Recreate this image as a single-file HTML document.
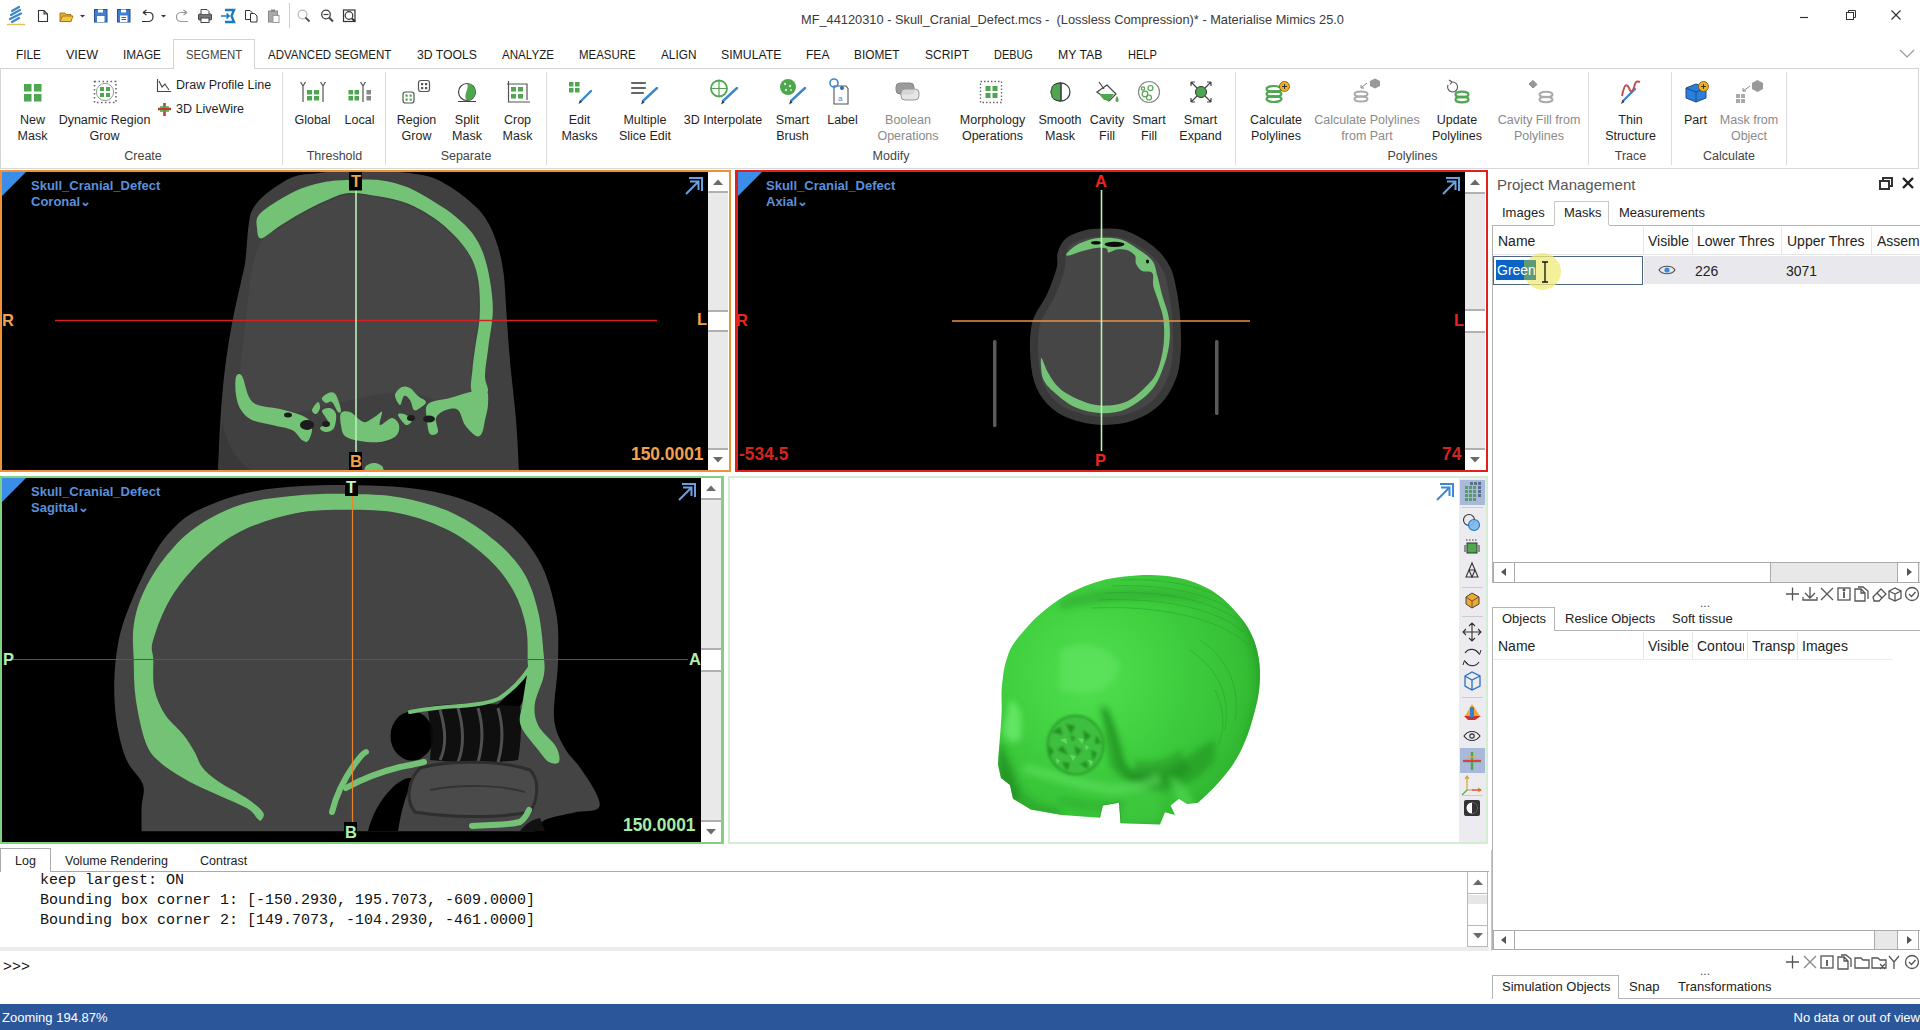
<!DOCTYPE html>
<html><head><meta charset="utf-8">
<style>
*{margin:0;padding:0;box-sizing:border-box}
html,body{width:1920px;height:1030px;overflow:hidden;background:#fff;font-family:"Liberation Sans",sans-serif;color:#222;position:relative}
.a{position:absolute}
.t{position:absolute;white-space:nowrap;line-height:1}
.menu{font-size:12.5px;color:#1a1a1a;top:49px}
.rl{position:absolute;font-size:12.5px;color:#1f1f1f;text-align:center;line-height:16px;white-space:nowrap;transform:translateX(-50%)}
.gl{color:#8a8a8a}
.grp{position:absolute;font-size:12.5px;color:#444;top:149.5px;transform:translateX(-50%);white-space:nowrap;line-height:1}
.sep{position:absolute;top:72px;width:1px;height:93px;background:#dcdcdc}
.vp{position:absolute;background:#000;overflow:hidden}
.vt{position:absolute;font-size:13px;font-weight:bold;color:#5a90dc;line-height:16px;white-space:nowrap}
.sb{position:absolute;width:20px;background:#e9e9e9}
.ol{position:absolute;font-weight:bold;font-size:15px;line-height:1}
</style></head><body>

<!-- TITLE BAR -->
<div class="t" style="left:801px;top:13px;font-size:13px;color:#3a3a3a;transform:scaleX(0.985);transform-origin:0 0">MF_44120310 - Skull_Cranial_Defect.mcs -&nbsp; (Lossless Compression)* - Materialise Mimics 25.0</div>

<!-- MENU -->
<div class="a" style="left:173px;top:39px;width:82px;height:30px;border:1px solid #d4d4d4;border-bottom:none;background:#fff"></div>
<div class="a" style="left:0;top:68px;width:1919px;height:101px;border:1px solid #d4d4d4;border-bottom-color:#d8d8d8"></div>
<div class="a" style="left:174px;top:67px;width:80px;height:3px;background:#fff"></div>
<div class="t menu" style="left:16px;transform:scaleX(0.944);transform-origin:0 0">FILE</div>
<div class="t menu" style="left:66px;transform:scaleX(1.0);transform-origin:0 0">VIEW</div>
<div class="t menu" style="left:123px;transform:scaleX(0.943);transform-origin:0 0">IMAGE</div>
<div class="t menu" style="left:186px;color:#444;transform:scaleX(0.907);transform-origin:0 0">SEGMENT</div>
<div class="t menu" style="left:268px;transform:scaleX(0.922);transform-origin:0 0">ADVANCED SEGMENT</div>
<div class="t menu" style="left:417px;transform:scaleX(0.978);transform-origin:0 0">3D TOOLS</div>
<div class="t menu" style="left:502px;transform:scaleX(0.927);transform-origin:0 0">ANALYZE</div>
<div class="t menu" style="left:579px;transform:scaleX(0.917);transform-origin:0 0">MEASURE</div>
<div class="t menu" style="left:661px;transform:scaleX(0.944);transform-origin:0 0">ALIGN</div>
<div class="t menu" style="left:721px;transform:scaleX(0.98);transform-origin:0 0">SIMULATE</div>
<div class="t menu" style="left:806px;transform:scaleX(0.965);transform-origin:0 0">FEA</div>
<div class="t menu" style="left:854px;transform:scaleX(0.948);transform-origin:0 0">BIOMET</div>
<div class="t menu" style="left:925px;transform:scaleX(0.96);transform-origin:0 0">SCRIPT</div>
<div class="t menu" style="left:994px;transform:scaleX(0.874);transform-origin:0 0">DEBUG</div>
<div class="t menu" style="left:1058px;transform:scaleX(0.984);transform-origin:0 0">MY TAB</div>
<div class="t menu" style="left:1128px;transform:scaleX(0.885);transform-origin:0 0">HELP</div>

<!-- RIBBON LABELS -->
<div class="rl" style="left:32.5px;top:112px">New<br>Mask</div>
<div class="rl" style="left:104.5px;top:112px">Dynamic Region<br>Grow</div>
<div class="t" style="left:176px;top:79px;font-size:12.5px;color:#1f1f1f">Draw Profile Line</div>
<div class="t" style="left:176px;top:103px;font-size:12.5px;color:#1f1f1f">3D LiveWire</div>
<div class="grp" style="left:143px">Create</div>
<div class="sep" style="left:282px"></div>
<div class="rl" style="left:312.5px;top:112px">Global</div>
<div class="rl" style="left:359.5px;top:112px">Local</div>
<div class="grp" style="left:334.5px">Threshold</div>
<div class="sep" style="left:385px"></div>
<div class="rl" style="left:416.5px;top:112px">Region<br>Grow</div>
<div class="rl" style="left:467px;top:112px">Split<br>Mask</div>
<div class="rl" style="left:517.5px;top:112px">Crop<br>Mask</div>
<div class="grp" style="left:466px">Separate</div>
<div class="sep" style="left:546px"></div>
<div class="rl" style="left:579.5px;top:112px">Edit<br>Masks</div>
<div class="rl" style="left:645px;top:112px">Multiple<br>Slice Edit</div>
<div class="rl" style="left:723px;top:112px">3D Interpolate</div>
<div class="rl" style="left:792.5px;top:112px">Smart<br>Brush</div>
<div class="rl" style="left:842.5px;top:112px">Label</div>
<div class="rl gl" style="left:908px;top:112px">Boolean<br>Operations</div>
<div class="rl" style="left:992.5px;top:112px">Morphology<br>Operations</div>
<div class="rl" style="left:1060px;top:112px">Smooth<br>Mask</div>
<div class="rl" style="left:1107px;top:112px">Cavity<br>Fill</div>
<div class="rl" style="left:1149px;top:112px">Smart<br>Fill</div>
<div class="rl" style="left:1200.5px;top:112px">Smart<br>Expand</div>
<div class="grp" style="left:891px">Modify</div>
<div class="sep" style="left:1235px"></div>
<div class="rl" style="left:1276px;top:112px">Calculate<br>Polylines</div>
<div class="rl gl" style="left:1367px;top:112px">Calculate Polylines<br>from Part</div>
<div class="rl" style="left:1457px;top:112px">Update<br>Polylines</div>
<div class="rl gl" style="left:1539px;top:112px">Cavity Fill from<br>Polylines</div>
<div class="grp" style="left:1412.5px">Polylines</div>
<div class="sep" style="left:1588px"></div>
<div class="rl" style="left:1630.5px;top:112px">Thin<br>Structure</div>
<div class="grp" style="left:1630.5px">Trace</div>
<div class="sep" style="left:1671px"></div>
<div class="rl" style="left:1695.5px;top:112px">Part</div>
<div class="rl gl" style="left:1749px;top:112px">Mask from<br>Object</div>
<div class="grp" style="left:1729px">Calculate</div>
<div class="sep" style="left:1786px"></div>


<svg class="a" style="left:0;top:0" width="1920" height="170" viewBox="0 0 1920 170">
<!-- quick access -->
<g>
<path d="M12,11 L19,7 M11,15 L20,10 M10,19 L21,13.5 M12,22 L19,18" stroke="#3c87c8" stroke-width="2.2" stroke-linecap="round"/>
<path d="M7,24.5 H25" stroke="#e0c060" stroke-width="1.5"/>
<path d="M38.5,10.5 H44 L47.5,14 V21.5 H38.5 Z M44,10.5 V14 H47.5" fill="#fff" stroke="#333" stroke-width="1.1"/>
<path d="M60,13 H65 L66,14.5 H71 V21.5 H60 Z" fill="#e8b030" stroke="#a07010" stroke-width="0.9"/>
<path d="M60,21.5 L62.5,16 H73 L71,21.5 Z" fill="#f5c542" stroke="#a07010" stroke-width="0.9"/>
<path d="M80,15 H85 L82.5,17.5 Z" fill="#333"/>
<rect x="94.5" y="9.5" width="12.5" height="12.5" fill="#3f7fd0" stroke="#23508a" stroke-width="1"/><rect x="98" y="9.5" width="5" height="3" fill="#fff"/><rect x="97" y="16" width="7.5" height="6" fill="#fff"/>
<rect x="117.5" y="9.5" width="12.5" height="12.5" fill="#3f7fd0" stroke="#23508a" stroke-width="1"/><rect x="121" y="9.5" width="5" height="3" fill="#fff"/><rect x="120" y="15.5" width="7.5" height="6.5" fill="#fff"/><path d="M121.5,17.5 H126 M121.5,19.5 H126" stroke="#333" stroke-width="0.8"/>
<path d="M143,12.5 L146.5,10 M143,12.5 L146.5,15 M143,12.5 H149 C152,12.5 153,15 153,17 C153,19.5 151,21.5 148,21.5 H142" fill="none" stroke="#333" stroke-width="1.2"/>
<path d="M161,15 H166 L163.5,17.5 Z" fill="#333"/>
<path d="M187,12.5 L183.5,10 M187,12.5 L183.5,15 M187,12.5 H181 C178,12.5 176.5,15 176.5,17 C176.5,19.5 178.5,21.5 181.5,21.5 H188" fill="none" stroke="#999" stroke-width="1.2"/>
<path d="M180,13.5 H187 M184.5,11 L187,13.5 L184.5,16 M180,21.5 H188" fill="none" stroke="#777" stroke-width="1" opacity="0"/>
<rect x="198.5" y="14" width="13" height="6" rx="1" fill="#777" stroke="#444" stroke-width="1"/><path d="M201,14 V9.5 H207 L209,11.5 V14" fill="#fff" stroke="#444" stroke-width="1"/><rect x="201" y="18" width="8" height="4.5" fill="#fff" stroke="#444" stroke-width="1"/>
<path d="M225,10 H234 L231.5,16 L234,22 H225" fill="none" stroke="#1a7ac0" stroke-width="2.4"/><path d="M221,16 H229 M226.5,13.5 L229,16 L226.5,18.5" stroke="#1a7ac0" stroke-width="1.6" fill="none"/>
<path d="M245.5,10.5 H250 L252,12.5 V19.5 H245.5 Z" fill="#fff" stroke="#333" stroke-width="1"/><path d="M250.5,13.5 H254.5 L257,16 V22 H250.5 Z" fill="#fff" stroke="#333" stroke-width="1"/>
<rect x="268.5" y="11" width="9" height="11" fill="#aaa" stroke="#888" stroke-width="1"/><rect x="271" y="9.5" width="4" height="2.5" fill="#888"/><rect x="273" y="15.5" width="6" height="7" fill="#fff" stroke="#999" stroke-width="1"/>
<path d="M289.5,3 V28" stroke="#d0d0d0"/>
<circle cx="302.5" cy="14.5" r="4.3" fill="none" stroke="#bbb" stroke-width="1.3"/><path d="M305.5,17.5 L309.5,21.5" stroke="#555" stroke-width="2"/>
<circle cx="326" cy="14.5" r="4.3" fill="none" stroke="#444" stroke-width="1.3"/><path d="M323.5,14.5 H328.5" stroke="#444" stroke-width="1.2"/><path d="M329,17.5 L333,21.5" stroke="#444" stroke-width="2"/>
<rect x="343.5" y="10" width="11.5" height="11.5" fill="none" stroke="#333" stroke-width="1.2"/><circle cx="349" cy="15.5" r="3.8" fill="none" stroke="#333" stroke-width="1.2"/><path d="M352,18.5 L355,21.5" stroke="#333" stroke-width="2"/>
</g>
<!-- window controls -->
<path d="M1800,17.5 H1808" stroke="#333" stroke-width="1.2"/>
<rect x="1846.5" y="12.5" width="7" height="7" fill="none" stroke="#333" stroke-width="1"/><path d="M1848.5,12.5 V10.5 H1855.5 V17.5 H1853.5" fill="none" stroke="#333" stroke-width="1"/>
<path d="M1891.5,10.5 L1900.5,19.5 M1900.5,10.5 L1891.5,19.5" stroke="#333" stroke-width="1.2"/>
<path d="M1900,50 L1907,57 L1914,50" fill="none" stroke="#999" stroke-width="1.2"/>
<!-- ribbon icons -->
<g fill="#4ea64e">
<rect x="24" y="84" width="7.5" height="7.5"/><rect x="34" y="84" width="7.5" height="7.5"/><rect x="24" y="94" width="7.5" height="7.5"/><rect x="34" y="94" width="7.5" height="7.5"/>
</g>
<rect x="94.5" y="81.5" width="21.5" height="21" fill="none" stroke="#666" stroke-width="1.6" stroke-dasharray="1.6,2.4"/>
<circle cx="105" cy="92" r="8.6" fill="#fff" stroke="#999" stroke-width="1"/>
<g fill="#4ea64e"><rect x="100" y="87" width="4" height="4"/><rect x="106" y="87" width="4" height="4"/><rect x="100" y="93" width="4" height="4"/><rect x="106" y="93" width="4" height="4"/></g>
<path d="M157.5,79 V91.5 H171 M159,81 L162,87 L165,84 L169,90" fill="none" stroke="#444" stroke-width="1.1"/>
<path d="M158,109 H171 M164.5,103 V116" stroke="#c0392b" stroke-width="2.5"/><rect x="160" y="106" width="9" height="6" fill="#4ea64e" opacity="0.8"/><path d="M158,109 H171" stroke="#c0392b" stroke-width="2"/>
<g fill="none" stroke="#555" stroke-width="1.2"><path d="M300.5,82 L303,86 V102 M305.5,82 L303,86 M320.5,82 L323,86 V102 M325.5,82 L323,86"/></g>
<g fill="#4ea64e"><rect x="307" y="90" width="5" height="4.5"/><rect x="314" y="90" width="5" height="4.5"/><rect x="307" y="96" width="5" height="4.5"/><rect x="314" y="96" width="5" height="4.5"/></g>
<g fill="#4ea64e"><rect x="348.5" y="90" width="4.5" height="4.5"/><rect x="354.5" y="90" width="4.5" height="4.5"/><rect x="348.5" y="96" width="4.5" height="4.5"/><rect x="354.5" y="96" width="4.5" height="4.5"/></g>
<path d="M360.5,82 L363,86 V102 M365.5,82 L363,86" fill="none" stroke="#555" stroke-width="1.2"/><g fill="#888"><rect x="366.5" y="90" width="4.5" height="4.5"/><rect x="366.5" y="96" width="4.5" height="4.5"/></g>
<rect x="403" y="92" width="11" height="11" rx="2.5" fill="#fff" stroke="#555" stroke-width="1.2"/><rect x="418.5" y="80.5" width="11" height="11" rx="2.5" fill="#fff" stroke="#555" stroke-width="1.2"/>
<g fill="#4ea64e"><rect x="405.5" y="94.5" width="2.2" height="2.2"/><rect x="409.5" y="94.5" width="2.2" height="2.2"/><rect x="405.5" y="98.5" width="2.2" height="2.2"/><rect x="409.5" y="98.5" width="2.2" height="2.2"/></g>
<g fill="#555"><rect x="421" y="83" width="2.2" height="2.2"/><rect x="425" y="83" width="2.2" height="2.2"/><rect x="421" y="87" width="2.2" height="2.2"/><rect x="425" y="87" width="2.2" height="2.2"/></g>
<circle cx="467" cy="92" r="8.5" fill="#fff" stroke="#444" stroke-width="1.2"/><path d="M467,83.5 A8.5,8.5 0 0 1 467,100.5 C462,96 470,88 467,83.5 Z" fill="#4ea64e"/><path d="M458,101.5 H476" stroke="#444" stroke-width="1"/>
<path d="M507,84 H527 V100 M508.5,81 V102 H530" fill="none" stroke="#555" stroke-width="1.2"/><g fill="#4ea64e"><rect x="511" y="87" width="5" height="4.5"/><rect x="518" y="87" width="5" height="4.5"/><rect x="511" y="94" width="5" height="4.5"/><rect x="518" y="94" width="5" height="4.5"/></g>
<g fill="#4ea64e"><rect x="569" y="82" width="4.5" height="4.5"/><rect x="575" y="82" width="4.5" height="4.5"/><rect x="569" y="88" width="4.5" height="4.5"/><rect x="575" y="88" width="4.5" height="4.5"/></g>
<g stroke="#3c87d0" stroke-width="2.4" stroke-linecap="round"><path d="M581,101 L591,91"/><path d="M643,101 L657,88"/><path d="M723,101 L737,88"/><path d="M791,101 L805,88"/><path d="M1623,101 L1635,89"/></g>
<g fill="#333"><path d="M578.5,104 L580,100 L582,102 Z"/><path d="M641,104.5 L642.5,100.5 L644.5,102.5 Z"/><path d="M721,104.5 L722.5,100.5 L724.5,102.5 Z"/><path d="M789,104.5 L790.5,100.5 L792.5,102.5 Z"/><path d="M1621,104 L1622.5,100 L1624.5,102 Z"/></g>
<g stroke="#666" stroke-width="2.2" stroke-linecap="round"><path d="M632,83 H645"/><path d="M632,88 H645"/><path d="M632,93 H643"/></g>
<circle cx="719" cy="88.5" r="8" fill="none" stroke="#4ea64e" stroke-width="1.8"/><path d="M711,88.5 H727 M719,80.5 V96.5" stroke="#4ea64e" stroke-width="1.2"/><ellipse cx="719" cy="88.5" rx="3.5" ry="8" fill="none" stroke="#4ea64e" stroke-width="1" opacity="0"/>
<circle cx="788" cy="87" r="8" fill="#4ea64e"/><g fill="#cfe8cf"><circle cx="785" cy="84" r="1.2"/><circle cx="790" cy="86" r="1.2"/><circle cx="786" cy="90" r="1.2"/><circle cx="791" cy="90" r="1"/></g>
<path d="M834,86 H846 L848,88.5 V104 H834 Z" fill="#fff" stroke="#555" stroke-width="1.1"/><circle cx="834" cy="83" r="4" fill="none" stroke="#3c87d0" stroke-width="1.6"/><circle cx="842" cy="88" r="2" fill="#2a6ab0"/><text x="838" y="101" font-size="8" fill="#3c87d0" font-family="Liberation Sans">a</text>
<rect x="896" y="83" width="18" height="11" rx="4" fill="#9a9a9a" stroke="#888"/><rect x="901" y="89" width="18" height="11" rx="4" fill="#e0e0e0" stroke="#999" fill-opacity="0.85"/>
<rect x="980.5" y="81.5" width="21" height="21" fill="none" stroke="#666" stroke-width="1.3" stroke-dasharray="1.5,2"/><g fill="#4ea64e"><rect x="985.5" y="86" width="5" height="5"/><rect x="992.5" y="86" width="5" height="5"/><rect x="985.5" y="93" width="5" height="5"/><rect x="992.5" y="93" width="5" height="5"/></g>
<circle cx="1061" cy="92" r="9" fill="#fff" stroke="#444" stroke-width="1.3"/><path d="M1061,83 C1055,83 1051,86 1052,89 C1050,91 1051,94 1052,95 C1051,98 1055,101 1061,101 Z" fill="#4ea64e" stroke="#333" stroke-width="1"/><path d="M1061,83 V101" stroke="#444" stroke-width="1.3"/>
<path d="M1097,92 L1107,85 L1116,94 L1109,101 Z" fill="#fff" stroke="#444" stroke-width="1.2"/><path d="M1099,94 L1114,94 L1109,101 L1104,100 Z" fill="#4ea64e"/><path d="M1099,82 L1104,89" stroke="#444" stroke-width="1.2"/><path d="M1117,96 C1115,99 1115,102 1117,102 C1119,102 1119,99 1117,96 Z" fill="#4ea64e"/>
<circle cx="1149" cy="92" r="10.5" fill="#fff" stroke="#888" stroke-width="1.2"/><g fill="none" stroke="#4ea64e" stroke-width="1.2"><circle cx="1145" cy="94" r="2.8"/><circle cx="1150.5" cy="88" r="2.5"/><circle cx="1149" cy="97.5" r="2.5"/><circle cx="1143" cy="88.5" r="1.6"/></g>
<circle cx="1201" cy="92" r="5.5" fill="#4ea64e" stroke="#333" stroke-width="1"/><g fill="none" stroke="#444" stroke-width="1.2"><path d="M1191,82 L1197,88 M1191,82 V86 M1191,82 H1195 M1211,82 L1205,88 M1211,82 V86 M1211,82 H1207 M1191,102 L1197,96 M1191,102 V98 M1191,102 H1195 M1211,102 L1205,96 M1211,102 V98 M1211,102 H1207"/></g>
<g fill="none" stroke="#4ea64e" stroke-width="2.2"><ellipse cx="1274" cy="89" rx="7.5" ry="3"/><ellipse cx="1274" cy="94" rx="7.5" ry="3"/><ellipse cx="1274" cy="99" rx="7.5" ry="3"/></g><circle cx="1284.5" cy="86.5" r="5" fill="#f0b020" stroke="#6a5010" stroke-width="0.8"/><path d="M1282,86.5 H1287 M1284.5,84 V89" stroke="#333" stroke-width="1"/>
<g fill="none" stroke="#aaa" stroke-width="2"><ellipse cx="1361" cy="94" rx="6.5" ry="2.6"/><ellipse cx="1361" cy="99" rx="6.5" ry="2.6"/></g><path d="M1370,81 L1375,78.5 L1380,81 V86 L1375,88.5 L1370,86 Z" fill="#999"/><path d="M1367,83 L1361,88 M1361,85 V88 H1364" fill="none" stroke="#888" stroke-width="1"/>
<path d="M1448,85 A5,5 0 1 0 1452,82 M1452,82 L1449,80 M1452,82 L1450,84.5" fill="none" stroke="#555" stroke-width="1.1"/><g fill="none" stroke="#4ea64e" stroke-width="2.2"><ellipse cx="1462" cy="94.5" rx="6.5" ry="2.8"/><ellipse cx="1462" cy="99.5" rx="6.5" ry="2.8"/></g>
<path d="M1529,84 L1533,80.5 L1537,84.5 L1533,88 Z" fill="#999" stroke="#888"/><g fill="none" stroke="#aaa" stroke-width="2"><ellipse cx="1546" cy="94.5" rx="6.5" ry="2.8"/><ellipse cx="1546" cy="99.5" rx="6.5" ry="2.8"/></g>
<path d="M1622,96 C1624,86 1626,82 1629,88 C1631,94 1633,92 1635,84 C1636,81 1638,81 1640,82" fill="none" stroke="#c05050" stroke-width="2"/>
<path d="M1686,88 L1696,84 L1706,88 V98 L1696,102 L1686,98 Z" fill="#2a80d8" stroke="#1a4a90" stroke-width="1"/><path d="M1686,88 L1696,92 L1706,88 M1696,92 V102" fill="none" stroke="#1a4a90" stroke-width="1"/><circle cx="1703.5" cy="86.5" r="5" fill="#f0b020" stroke="#6a5010" stroke-width="0.8"/><path d="M1701,86.5 H1706 M1703.5,84 V89" stroke="#333" stroke-width="1"/>
<g fill="#aaa"><rect x="1736" y="94" width="4" height="4"/><rect x="1741" y="94" width="4" height="4"/><rect x="1736" y="99" width="4" height="4"/><rect x="1741" y="99" width="4" height="4"/></g><path d="M1752,83 L1757.5,80 L1763,83 V89 L1757.5,92 L1752,89 Z" fill="#999"/><path d="M1750,86 L1743,91 M1743,88 V91 H1746" fill="none" stroke="#888" stroke-width="1"/>
</svg>


<!-- VIEWPORTS -->
<div class="a" style="left:0;top:170px;width:731px;height:302px;border:2px solid #f0913a"></div>

<!-- CORONAL -->
<svg class="a" style="left:2px;top:172px" width="706" height="298" viewBox="2 172 706 298">
<rect x="2" y="172" width="706" height="298" fill="#000"/>
<path d="M218.0,472.0 C218.4,463.3 219.3,436.6 220.4,419.6 C221.5,402.6 222.9,386.0 224.8,370.0 C226.7,354.0 229.3,338.1 232.0,323.5 C234.7,308.9 238.6,292.9 240.8,282.7 C243.0,272.4 243.9,271.7 245.2,262.0 C246.5,252.3 247.4,233.3 248.7,224.4 C250.0,215.5 250.1,213.8 253.0,208.7 C255.9,203.6 259.6,199.1 266.2,193.8 C272.8,188.6 283.6,180.7 292.4,177.2 C301.1,173.7 307.4,174.1 318.7,172.9 C330.0,171.7 343.0,169.7 360.0,170.0 C377.0,170.3 406.1,172.1 420.8,174.7 C435.5,177.3 439.0,180.4 448.0,185.6 C457.0,190.8 468.2,199.7 475.0,206.0 C481.8,212.3 484.9,216.9 488.7,223.7 C492.5,230.5 495.5,238.4 498.0,246.8 C500.5,255.2 502.3,263.1 503.7,274.0 C505.1,284.9 505.3,297.5 506.4,312.0 C507.4,326.5 508.4,343.1 510.0,361.0 C511.6,378.9 514.5,401.1 516.0,419.6 C517.5,438.1 518.5,463.3 519.0,472.0 L519,475 L218,475 Z" fill="#404040"/>
<path d="M262.0,240.0 C266.7,233.0 273.5,232.2 280.0,228.0 C286.5,223.8 293.2,219.3 301.0,215.0 C308.8,210.7 319.0,205.3 327.0,202.0 C335.0,198.7 340.2,195.7 349.0,195.0 C357.8,194.3 370.3,196.3 380.0,198.0 C389.7,199.7 398.0,201.3 407.0,205.0 C416.0,208.7 426.3,214.8 434.0,220.0 C441.7,225.2 447.5,230.7 453.0,236.0 C458.5,241.3 463.3,246.7 467.0,252.0 C470.7,257.3 473.2,262.0 475.0,268.0 C476.8,274.0 477.5,279.7 478.0,288.0 C478.5,296.3 478.7,308.2 478.0,318.0 C477.3,327.8 475.2,338.3 474.0,347.0 C472.8,355.7 471.7,362.0 471.0,370.0 C470.3,378.0 475.2,390.0 470.0,395.0 C464.8,400.0 451.7,400.5 440.0,400.0 C428.3,399.5 415.0,392.0 400.0,392.0 C385.0,392.0 366.7,396.7 350.0,400.0 C333.3,403.3 316.7,410.3 300.0,412.0 C283.3,413.7 260.0,415.3 250.0,410.0 C240.0,404.7 240.7,395.0 240.0,380.0 C239.3,365.0 244.0,338.3 246.0,320.0 C248.0,301.7 249.3,283.3 252.0,270.0 C254.7,256.7 257.3,247.0 262.0,240.0 Z" fill="#464646"/>
<path d="M222,420 C228,450 240,465 255,472 L218,472 Z" fill="#393939"/>
<g fill="#74c276">
<path d="M258.4,215.7 C261.4,211.5 267.9,207.1 275.0,202.6 C282.1,198.1 292.5,192.1 301.2,188.6 C309.9,185.1 319.4,183.0 327.4,181.6 C335.4,180.2 340.4,180.1 349.2,179.9 C358.0,179.7 370.4,179.0 380.0,180.2 C389.6,181.4 397.9,183.4 407.0,187.0 C416.1,190.6 426.2,197.0 434.4,202.0 C442.6,207.0 449.7,211.7 456.0,216.9 C462.3,222.1 467.8,227.1 472.4,233.2 C476.9,239.3 480.4,245.7 483.3,253.6 C486.2,261.5 488.4,271.0 490.0,280.7 C491.6,290.4 493.1,301.0 492.8,312.0 C492.5,323.0 489.7,336.1 488.4,346.8 C487.1,357.5 485.1,368.5 485.0,376.0 C484.9,383.5 489.7,389.3 487.5,392.0 C485.3,394.7 474.5,395.7 472.0,392.0 C469.5,388.3 471.8,377.5 472.4,370.0 C472.9,362.5 474.1,355.5 475.3,346.8 C476.5,338.1 479.0,327.5 479.6,317.6 C480.2,307.7 479.9,295.9 479.2,287.5 C478.4,279.1 477.1,273.1 475.1,267.0 C473.1,260.9 470.6,256.2 467.0,250.8 C463.4,245.4 458.8,239.9 453.4,234.5 C448.0,229.1 442.1,223.4 434.4,218.2 C426.7,213.0 416.1,206.9 407.0,203.3 C397.9,199.7 389.6,198.2 380.0,196.5 C370.4,194.8 358.0,192.4 349.2,193.0 C340.4,193.6 335.4,196.7 327.4,200.0 C319.4,203.3 309.2,208.6 301.2,213.0 C293.2,217.4 286.0,222.0 279.3,226.2 C272.6,230.4 264.7,238.1 261.0,238.4 C257.3,238.7 257.4,231.8 257.0,228.0 C256.6,224.2 255.4,219.9 258.4,215.7 Z"/>
<path d="M236.0,377.0 C237.0,373.8 239.8,372.7 242.0,376.0 C244.2,379.3 246.3,392.2 249.0,397.0 C251.7,401.8 252.8,403.0 258.0,405.0 C263.2,407.0 273.3,407.5 280.0,409.0 C286.7,410.5 293.2,412.2 298.0,414.0 C302.8,415.8 306.7,417.3 309.0,420.0 C311.3,422.7 312.2,426.5 312.0,430.0 C311.8,433.5 309.7,439.3 308.0,441.0 C306.3,442.7 304.7,441.8 302.0,440.0 C299.3,438.2 297.0,432.5 292.0,430.0 C287.0,427.5 278.7,426.7 272.0,425.0 C265.3,423.3 257.2,422.5 252.0,420.0 C246.8,417.5 243.7,414.2 241.0,410.0 C238.3,405.8 236.8,400.5 236.0,395.0 C235.2,389.5 235.0,380.2 236.0,377.0 Z"/><path d="M322.0,398.0 C322.7,396.2 327.7,393.0 330.0,392.5 C332.3,392.0 334.2,392.1 336.0,395.0 C337.8,397.9 340.7,407.2 341.0,410.0 C341.3,412.8 339.5,413.3 338.0,412.0 C336.5,410.7 334.0,403.5 332.0,402.0 C330.0,400.5 327.7,403.7 326.0,403.0 C324.3,402.3 321.3,399.8 322.0,398.0 Z"/><path d="M312.0,410.0 C312.3,408.0 316.7,402.3 318.0,402.0 C319.3,401.7 320.3,406.0 320.0,408.0 C319.7,410.0 317.3,413.7 316.0,414.0 C314.7,414.3 311.7,412.0 312.0,410.0 Z"/><path d="M322.0,411.0 C322.3,408.7 327.7,407.5 330.0,408.0 C332.3,408.5 335.3,410.7 336.0,414.0 C336.7,417.3 335.7,425.0 334.0,428.0 C332.3,431.0 328.3,432.0 326.0,432.0 C323.7,432.0 319.7,429.7 320.0,428.0 C320.3,426.3 327.7,424.8 328.0,422.0 C328.3,419.2 321.7,413.3 322.0,411.0 Z"/><path d="M341.0,413.0 C342.5,410.8 346.8,410.8 350.0,412.0 C353.2,413.2 357.3,418.3 360.0,420.0 C362.7,421.7 363.3,422.7 366.0,422.0 C368.7,421.3 373.3,417.7 376.0,416.0 C378.7,414.3 381.3,410.5 382.0,412.0 C382.7,413.5 378.3,424.0 380.0,425.0 C381.7,426.0 388.8,418.0 392.0,418.0 C395.2,418.0 398.3,422.0 399.0,425.0 C399.7,428.0 399.2,433.2 396.0,436.0 C392.8,438.8 386.0,441.2 380.0,442.0 C374.0,442.8 365.8,442.0 360.0,441.0 C354.2,440.0 348.2,438.7 345.0,436.0 C341.8,433.3 341.7,428.8 341.0,425.0 C340.3,421.2 339.5,415.2 341.0,413.0 Z"/><path d="M395.0,395.0 C395.3,392.0 399.5,388.2 402.0,387.0 C404.5,385.8 407.3,386.5 410.0,388.0 C412.7,389.5 415.3,393.7 418.0,396.0 C420.7,398.3 425.7,400.0 426.0,402.0 C426.3,404.0 422.0,406.7 420.0,408.0 C418.0,409.3 415.7,411.3 414.0,410.0 C412.3,408.7 411.7,402.3 410.0,400.0 C408.3,397.7 405.7,395.2 404.0,396.0 C402.3,396.8 401.5,405.2 400.0,405.0 C398.5,404.8 394.7,398.0 395.0,395.0 Z"/><path d="M398.0,415.0 C397.7,413.2 401.7,413.2 404.0,414.0 C406.3,414.8 411.7,418.2 412.0,420.0 C412.3,421.8 408.3,425.8 406.0,425.0 C403.7,424.2 398.3,416.8 398.0,415.0 Z"/><path d="M428.0,404.0 C431.8,400.3 443.0,400.0 450.0,398.0 C457.0,396.0 464.0,393.3 470.0,392.0 C476.0,390.7 483.0,387.8 486.0,390.0 C489.0,392.2 488.2,400.0 488.0,405.0 C487.8,410.0 486.0,415.3 485.0,420.0 C484.0,424.7 483.5,430.3 482.0,433.0 C480.5,435.7 478.8,437.3 476.0,436.0 C473.2,434.7 468.0,429.3 465.0,425.0 C462.0,420.7 461.2,412.5 458.0,410.0 C454.8,407.5 449.7,408.7 446.0,410.0 C442.3,411.3 437.3,414.3 436.0,418.0 C434.7,421.7 439.0,429.3 438.0,432.0 C437.0,434.7 431.8,436.0 430.0,434.0 C428.2,432.0 427.3,425.0 427.0,420.0 C426.7,415.0 424.2,407.7 428.0,404.0 Z"/><path d="M366.0,466.0 C367.3,464.5 371.3,463.0 374.0,463.0 C376.7,463.0 380.7,464.5 382.0,466.0 C383.3,467.5 384.7,471.0 382.0,472.0 C379.3,473.0 368.7,473.0 366.0,472.0 C363.3,471.0 364.7,467.5 366.0,466.0 Z"/>
</g>
<g fill="#1c1c1c"><ellipse cx="288" cy="415" rx="4" ry="2.5"/><ellipse cx="307" cy="425" rx="7" ry="5"/><ellipse cx="326" cy="424" rx="4" ry="3"/><ellipse cx="411" cy="418" rx="4" ry="3"/><ellipse cx="429" cy="419" rx="6" ry="3.5"/></g>
<line x1="55" y1="320.5" x2="657" y2="320.5" stroke="#d42020" stroke-width="1.4"/>
<line x1="356" y1="190" x2="356" y2="452" stroke="#b8f0b8" stroke-width="1.6"/>
<rect x="349" y="172" width="13" height="18.5" fill="#000"/>
<rect x="349" y="452" width="13" height="18" fill="#000"/>
</svg>
<div class="ol" style="left:351px;top:173px;color:#f4a04c;font-size:16.5px">T</div>
<div class="ol" style="left:350px;top:453px;color:#f4a04c;font-size:16.5px">B</div>
<div class="ol" style="left:2px;top:312px;color:#f4a04c;font-size:16.5px">R</div>
<div class="ol" style="left:697px;top:311px;color:#f4a04c;font-size:16.5px">L</div>
<div class="ol" style="left:631px;top:445px;color:#f4a04c;font-size:18.5px;transform:scaleX(0.94);transform-origin:0 0">150.0001</div>
<div class="vt" style="left:31px;top:178px">Skull_Cranial_Defect<br>Coronal&#8964;</div>
<svg class="a" style="left:2px;top:172px" width="26" height="26"><path d="M0,0 H24 L0,24 Z" fill="#3a8ee8"/></svg>

<div class="a" style="left:735px;top:170px;width:753px;height:302px;border:2px solid #e0201c;border-left-width:3px"></div>

<!-- AXIAL -->
<svg class="a" style="left:738px;top:172px" width="727" height="298" viewBox="738 172 727 298">
<rect x="738" y="172" width="727" height="298" fill="#000"/>
<path d="M1036.5,322.0 C1039.2,312.9 1046.4,305.2 1050.4,296.3 C1054.4,287.4 1058.7,275.9 1060.6,268.8 C1062.5,261.7 1060.2,258.1 1061.6,253.5 C1062.9,248.9 1064.6,244.5 1068.7,241.3 C1072.8,238.1 1080.6,235.6 1086.0,234.2 C1091.4,232.8 1095.3,232.7 1101.3,232.6 C1107.2,232.5 1114.9,231.9 1121.7,233.7 C1128.5,235.5 1136.0,239.7 1142.0,243.3 C1148.0,247.0 1153.1,251.0 1157.4,255.6 C1161.7,260.2 1165.0,265.0 1167.6,270.9 C1170.1,276.8 1171.3,284.4 1172.7,291.2 C1174.1,298.0 1175.0,305.1 1175.7,311.6 C1176.4,318.1 1176.6,323.5 1176.8,330.0 C1177.0,336.5 1177.5,342.9 1176.8,350.6 C1176.1,358.3 1175.9,367.5 1172.7,376.0 C1169.5,384.5 1164.2,394.7 1157.4,401.5 C1150.6,408.3 1141.2,413.6 1131.9,416.8 C1122.6,420.0 1111.5,421.2 1101.3,420.9 C1091.1,420.6 1079.3,418.0 1070.8,414.8 C1062.3,411.6 1055.8,407.1 1050.4,401.5 C1045.0,395.9 1040.9,389.6 1038.2,381.1 C1035.5,372.6 1034.3,360.5 1034.0,350.6 C1033.7,340.8 1033.8,331.1 1036.5,322.0 Z" fill="#464646" stroke="#393939" stroke-width="8"/>
<path d="M1066.7,253.5 C1067.9,251.8 1071.8,247.8 1075.9,245.4 C1080.0,243.0 1086.0,240.6 1091.1,239.3 C1096.2,238.0 1101.3,237.6 1106.4,237.7 C1111.5,237.8 1116.6,238.0 1121.7,239.8 C1126.8,241.6 1131.9,244.9 1137.0,248.4 C1142.1,251.9 1148.9,256.1 1152.3,260.7 C1155.7,265.3 1155.7,270.1 1157.4,276.0 C1159.1,281.9 1160.6,289.5 1162.5,296.3 C1164.4,303.1 1167.4,309.4 1168.6,316.7 C1169.8,324.0 1170.3,332.5 1169.6,340.4 C1168.9,348.2 1167.4,355.6 1164.5,363.8 C1161.6,372.0 1158.6,381.8 1152.3,389.3 C1146.0,396.8 1135.3,404.7 1126.8,408.7 C1118.3,412.7 1109.8,413.4 1101.3,413.2 C1092.8,413.0 1083.5,410.9 1075.9,407.6 C1068.3,404.3 1061.0,398.1 1055.5,393.4 C1050.0,388.6 1045.6,385.1 1043.2,379.1 C1040.8,373.2 1040.4,358.7 1041.2,357.7 C1042.0,356.7 1045.1,367.7 1048.3,373.0 C1051.5,378.3 1055.1,384.7 1060.6,389.3 C1066.0,393.9 1074.2,397.8 1081.0,400.5 C1087.8,403.2 1093.7,405.4 1101.3,405.6 C1108.9,405.8 1119.1,404.9 1126.8,401.5 C1134.5,398.1 1142.1,390.3 1147.2,385.2 C1152.3,380.1 1154.7,377.6 1157.4,371.0 C1160.1,364.4 1162.5,354.0 1163.5,345.5 C1164.5,337.0 1164.3,327.4 1163.5,320.0 C1162.7,312.6 1160.1,307.0 1158.4,301.4 C1156.7,295.8 1154.3,290.9 1153.3,286.1 C1152.3,281.4 1154.2,275.4 1152.3,272.9 C1150.4,270.4 1144.7,272.4 1142.0,270.9 C1139.3,269.4 1137.2,266.2 1136.0,263.7 C1134.8,261.1 1136.5,257.9 1135.0,255.6 C1133.5,253.3 1129.9,251.0 1126.8,250.0 C1123.7,249.0 1119.6,249.1 1116.6,249.5 C1113.5,249.9 1110.2,252.7 1108.5,252.5 C1106.8,252.3 1108.5,249.2 1106.4,248.4 C1104.4,247.7 1100.4,247.5 1096.2,248.0 C1092.0,248.5 1085.6,250.2 1081.0,251.5 C1076.4,252.8 1071.1,255.3 1068.7,255.6 C1066.3,255.9 1065.5,255.2 1066.7,253.5 Z" fill="#74c276"/>
<g fill="#0c0c0c"><ellipse cx="1096" cy="242.8" rx="5" ry="1.8"/><ellipse cx="1114.5" cy="244.3" rx="10" ry="2.6"/><ellipse cx="1147.5" cy="261.5" rx="1.5" ry="2"/></g>
<rect x="993" y="340" width="3.5" height="87" rx="1.5" fill="#5a5a5a"/>
<rect x="1215" y="340" width="3.5" height="75" rx="1.5" fill="#5a5a5a"/>
<line x1="952" y1="321" x2="1250" y2="321" stroke="#e8904a" stroke-width="1.4"/>
<line x1="1101.5" y1="190" x2="1101.5" y2="451" stroke="#b8f0b8" stroke-width="1.6"/>
</svg>
<div class="ol" style="left:1095px;top:173px;color:#e8251e;font-size:16.5px">A</div>
<div class="ol" style="left:1095px;top:452px;color:#e8251e;font-size:16.5px">P</div>
<div class="ol" style="left:736px;top:312px;color:#e8251e;font-size:16.5px">R</div>
<div class="ol" style="left:1454px;top:312px;color:#e8251e;font-size:16.5px">L</div>
<div class="ol" style="left:739px;top:445px;color:#d8231c;font-size:18.5px;transform:scaleX(0.94);transform-origin:0 0">-534.5</div>
<div class="ol" style="left:1442px;top:445px;color:#d8231c;font-size:18.5px;transform:scaleX(0.94);transform-origin:0 0">74</div>
<div class="vt" style="left:766px;top:178px">Skull_Cranial_Defect<br>Axial&#8964;</div>
<svg class="a" style="left:738px;top:172px" width="26" height="26"><path d="M0,0 H24 L0,24 Z" fill="#3a8ee8"/></svg>

<div class="a" style="left:0;top:476px;width:724px;height:368px;border:2px solid #80d080;border-right-width:3px"></div>

<!-- SAGITTAL -->
<svg class="a" style="left:2px;top:478px" width="699" height="364" viewBox="2 478 699 364">
<rect x="2" y="478" width="699" height="364" fill="#000"/>
<path d="M141.6,831.2 C141.6,827.1 141.4,814.4 141.6,806.6 C141.8,798.9 145.5,792.5 143.0,784.7 C140.5,776.9 130.9,770.0 126.6,760.0 C122.3,750.0 119.1,737.2 117.0,724.4 C114.9,711.6 114.0,697.0 114.2,683.3 C114.4,669.6 115.9,654.8 118.4,642.0 C120.9,629.2 123.9,620.3 129.3,606.6 C134.7,592.9 144.2,572.4 151.0,560.0 C157.8,547.6 162.0,540.4 170.0,532.0 C178.0,523.6 184.2,516.7 199.0,509.8 C213.8,502.9 234.2,494.5 259.0,490.4 C283.8,486.3 318.0,484.7 347.5,485.0 C377.0,485.3 410.5,486.7 435.8,492.0 C461.1,497.3 482.4,505.7 499.5,516.9 C516.6,528.1 528.9,543.4 538.3,559.3 C547.7,575.2 552.7,595.2 556.0,612.3 C559.3,629.4 558.3,644.2 558.0,661.8 C557.7,679.4 552.9,703.6 554.0,718.0 C555.1,732.4 560.4,739.8 564.7,748.0 C569.0,756.2 574.8,760.0 580.0,767.5 C585.2,775.0 593.0,786.1 596.0,793.0 C599.0,799.9 601.6,805.4 598.0,808.6 C594.4,811.9 583.3,810.6 574.5,812.5 C565.7,814.4 551.6,816.9 545.0,820.0 C538.4,823.1 536.7,829.3 535.0,831.2 Z" fill="#444"/>
<g fill="#000">
<ellipse cx="412" cy="736" rx="21.5" ry="24.5"/>
<path d="M539,658 C530,668 515,690 496,706 L520,706 C530,690 536,675 539,658 Z"/>
<path d="M368,831 C372,815 380,800 392,788 C400,780 408,777 414,778 C408,790 402,805 398,831 Z"/>
<path d="M520,831 C525,825 530,820 540,818 L545,831 Z" fill="#111"/>
</g>
<g fill="#0a0a0a" opacity="0.9">
<path d="M427,707 C450,703 480,703 520,706 C522,720 521,745 518,760 C500,763 460,763 430,760 C432,740 430,720 427,707 Z"/>
</g>
<g fill="none" stroke="#505050" stroke-width="3"><path d="M440,710 C446,730 446,748 440,760"/><path d="M458,708 C464,728 464,748 458,762"/><path d="M478,708 C484,728 482,748 478,762"/><path d="M498,708 C504,728 502,748 498,762"/></g>
<path d="M420,768 C450,760 500,760 530,770 C540,780 538,800 530,812 C500,818 450,818 415,812 C405,800 408,780 420,768 Z" fill="#4a4a4a" stroke="#2e2e2e" stroke-width="3"/>
<path d="M430,790 C460,784 500,785 525,792" fill="none" stroke="#333" stroke-width="2"/>
<g fill="none" stroke="#72c174" stroke-linecap="round" stroke-linejoin="round">
</g>
<path d="M257.3,818.4 C255.1,816.4 254.1,812.5 247.5,808.6 C240.9,804.7 227.8,799.6 218.0,795.0 C208.2,790.4 198.4,786.8 188.6,781.2 C178.8,775.6 166.4,768.1 159.2,761.6 C152.0,755.1 149.4,752.5 145.5,742.0 C141.6,731.5 137.7,712.5 135.7,698.8 C133.7,685.1 134.0,671.6 133.7,659.6 C133.3,647.6 132.1,637.3 133.6,626.5 C135.1,615.7 137.4,605.9 142.4,594.7 C147.4,583.5 154.8,570.5 163.6,559.3 C172.4,548.1 182.4,536.6 195.4,527.5 C208.4,518.4 224.9,509.8 241.4,504.5 C257.9,499.2 276.7,497.5 294.4,495.7 C312.1,493.9 329.8,493.6 347.5,493.9 C365.2,494.2 382.8,494.1 400.5,497.4 C418.2,500.6 437.6,506.0 453.5,513.4 C469.4,520.8 484.2,531.6 496.0,541.6 C507.8,551.6 517.2,561.6 524.2,573.4 C531.2,585.2 535.0,598.7 538.3,612.3 C541.5,625.9 542.8,644.2 543.7,654.8 C544.6,665.4 545.2,667.8 543.7,676.0 C542.2,684.2 535.7,696.0 534.8,704.2 C533.9,712.5 534.8,718.4 538.3,725.5 C541.8,732.6 552.5,740.6 556.0,746.7 C559.5,752.8 560.2,759.5 559.0,762.0 C557.8,764.5 552.5,764.0 549.0,762.0 C545.5,760.0 543.0,756.1 538.3,750.0 C533.6,743.9 523.4,733.1 520.7,725.5 C518.1,717.9 521.2,713.5 522.4,704.2 C523.6,695.0 526.8,677.1 527.7,670.0 C528.6,662.9 528.0,669.0 527.7,661.8 C527.4,654.5 528.4,638.3 526.0,626.5 C523.6,614.7 519.8,602.3 513.6,591.1 C507.4,579.9 499.5,569.3 488.9,559.3 C478.3,549.3 464.7,538.6 450.0,531.0 C435.3,523.4 417.6,516.9 400.5,513.4 C383.4,509.9 365.2,509.8 347.5,509.8 C329.8,509.8 312.1,509.9 294.4,513.4 C276.7,516.9 256.7,523.4 241.4,531.0 C226.1,538.6 214.3,548.1 202.5,559.3 C190.7,570.5 178.9,584.7 170.7,598.2 C162.4,611.8 155.9,630.4 153.0,640.6 C150.1,650.8 153.1,651.5 153.3,659.6 C153.5,667.7 152.4,679.9 154.3,689.0 C156.2,698.1 160.3,707.0 165.0,714.5 C169.7,722.0 177.8,727.8 182.7,734.0 C187.6,740.2 191.2,746.2 194.5,751.8 C197.8,757.4 198.5,762.6 202.4,767.5 C206.3,772.4 210.5,776.0 218.0,781.2 C225.5,786.4 240.0,793.6 247.5,798.8 C255.0,804.0 260.9,808.9 263.1,812.5 C265.4,816.1 262.0,819.4 261.0,820.4 C260.0,821.4 259.6,820.4 257.3,818.4 Z" fill="#74c276"/>
<g fill="none" stroke="#74c276" stroke-linecap="round" stroke-linejoin="round">
<path d="M534,660 C528,672 518,686 500,698 C490,703 475,705 460,706 C440,707 425,709 410,712" stroke-width="4"/>
<path d="M332,812 C336,795 345,778 354,765 C360,757 363,753 366,752" stroke-width="6"/>
<path d="M346,788 C360,780 380,772 400,767 C410,765 420,763 424,762" stroke-width="6"/>
<path d="M472,826 C490,824 505,826 520,822 C526,818 528,812 529,810" stroke-width="6"/>
</g>
<line x1="13" y1="659.5" x2="688" y2="659.5" stroke="#d42020" stroke-width="1.2"/>
<line x1="352.5" y1="495" x2="352.5" y2="823" stroke="#e8852e" stroke-width="1.2"/>
<rect x="345" y="478" width="13" height="18" fill="#000"/>
<rect x="344" y="822" width="13" height="20" fill="#000"/>
</svg>
<div class="ol" style="left:346px;top:479px;color:#c0f4c0;font-size:16.5px">T</div>
<div class="ol" style="left:345px;top:824px;color:#b0f0b0;font-size:16.5px">B</div>
<div class="ol" style="left:3px;top:651px;color:#b0f0b0;font-size:16.5px">P</div>
<div class="ol" style="left:689px;top:651px;color:#b0f0b0;font-size:16.5px">A</div>
<div class="ol" style="left:623px;top:816px;color:#a8eca8;font-size:18.5px;transform:scaleX(0.94);transform-origin:0 0">150.0001</div>
<div class="vt" style="left:31px;top:484px">Skull_Cranial_Defect<br>Sagittal&#8964;</div>
<svg class="a" style="left:2px;top:478px" width="26" height="26"><path d="M0,0 H24 L0,24 Z" fill="#3a8ee8"/></svg>

<div class="a" style="left:728px;top:476px;width:760px;height:368px;border:2px solid #d4ecd4"></div>


<!-- 3D VIEW -->
<svg class="a" style="left:980px;top:560px" width="300" height="280" viewBox="980 560 300 280">
<defs>
<radialGradient id="sg" cx="1090" cy="675" r="200" gradientUnits="userSpaceOnUse">
<stop offset="0" stop-color="#50e050"/><stop offset="0.4" stop-color="#40d040"/><stop offset="0.75" stop-color="#36c036"/><stop offset="1" stop-color="#28a228"/>
</radialGradient>
<filter id="bl" x="-30%" y="-30%" width="160%" height="160%"><feGaussianBlur stdDeviation="3"/></filter>
<filter id="bl2" x="-30%" y="-30%" width="160%" height="160%"><feGaussianBlur stdDeviation="1.2"/></filter>
<clipPath id="skc"><path id="skp" d="M1143,575 C1125,576 1110,578 1102,580.4 C1085,585 1072,591 1061.5,598 C1048,607 1038,615 1029,625 C1020,635 1014,642 1010,649.7 C1006,660 1004,668 1003,676.8 C1001,690 1001.5,698 1001.7,704 C1002,720 999,745 998,764.7 L1001,778 L1010,785 L1013,798.7 L1030.8,809.6 L1062,815 L1100,817.8 L1102.8,805.5 L1119,802.8 L1120.5,823.2 L1160,824.5 L1165,812.3 L1175,815 L1170.7,805.5 L1179,798.7 L1187,804 L1198,802.8 C1210,792 1220,782 1230,768.8 C1240,755 1248,738 1254.5,712 C1258,700 1260,688 1260,674 C1260,662 1258,652 1254.5,641.5 C1250,630 1245,622 1238,614.3 C1230,605 1222,597 1211,590 C1200,584 1190,580 1178,577.7 C1166,575.5 1155,575 1143,575 Z"/></clipPath>
</defs>
<g clip-path="url(#skc)">
<rect x="980" y="560" width="300" height="280" fill="url(#sg)"/>
<g filter="url(#bl)">
<path d="M1100,705 C1112,712 1118,735 1122,760 C1130,772 1150,776 1170,770 C1185,760 1200,745 1215,740 L1215,760 C1200,780 1180,790 1160,792 C1140,790 1120,780 1110,765 C1106,745 1104,725 1100,705 Z" fill="#249824" opacity="0.7"/>
<path d="M1000,740 C1008,750 1015,770 1022,790 C1030,800 1040,806 1060,808 L1060,830 L990,830 Z" fill="#259a25" opacity="0.55"/>
<path d="M1240,620 C1262,660 1262,700 1245,740 L1275,740 L1275,620 Z" fill="#2a9a2a" opacity="0.6"/>
<path d="M1060,600 C1100,585 1160,585 1210,600 C1160,598 1100,600 1060,610 Z" fill="#2aa02a" opacity="0.5"/>
<path d="M1010,700 C1020,702 1024,720 1020,740 C1012,745 1005,740 1003,730 Z" fill="#6cec6c" opacity="0.8"/>
<path d="M1060,650 C1080,640 1110,645 1120,665 C1115,690 1090,700 1060,690 Z" fill="#62e462" opacity="0.6"/>
<path d="M1135,760 C1150,765 1170,760 1180,750 L1190,770 C1175,785 1150,790 1135,780 Z" fill="#1e8a1e" opacity="0.5"/>
<path d="M1104,708 C1112,725 1118,745 1124,770 C1130,778 1140,780 1152,777" fill="none" stroke="#1a861a" stroke-width="5" opacity="0.7"/>
<path d="M1024,768 C1050,775 1080,785 1112,790 C1130,790 1145,785 1160,778" fill="none" stroke="#62e462" stroke-width="10" opacity="0.55"/>
<path d="M998,745 C1008,760 1015,780 1020,800 L1000,800 Z" fill="#1d8a1d" opacity="0.6"/>
<path d="M1168,775 C1180,780 1190,790 1194,805 L1180,805 C1176,795 1172,785 1168,775 Z" fill="#55dc55" opacity="0.6"/>
<path d="M1060,800 C1080,805 1100,808 1125,805" fill="none" stroke="#1f8f1f" stroke-width="3" opacity="0.6"/>
<path d="M1125,790 L1160,790 L1160,822 L1122,822 Z" fill="#44cc44" opacity="0.5"/>

</g>
<g fill="none" stroke="#2a9e2a" stroke-width="0.9" opacity="0.55">
<path d="M1120,580 C1160,578 1200,585 1225,600"/><path d="M1112,586 C1160,584 1205,592 1232,610"/><path d="M1105,593 C1160,590 1210,600 1238,620"/><path d="M1098,600 C1160,597 1215,608 1244,632"/><path d="M1092,608 C1160,605 1220,618 1250,646"/>
<path d="M1200,640 C1230,660 1240,690 1235,720"/><path d="M1190,650 C1222,672 1230,700 1225,730"/><path d="M1215,690 C1225,710 1225,730 1218,745"/>
</g>
<ellipse cx="1075.5" cy="745" rx="28" ry="29.5" fill="#3fbf3f"/>
<g filter="url(#bl2)">
<g fill="#1a7f1a" opacity="0.75">
<path d="M1052,732 l8,-5 l3,8 z"/><path d="M1066,724 l9,2 l-4,8 z"/><path d="M1083,730 l8,6 l-6,5 z"/><path d="M1057,750 l6,-4 l5,9 z"/><path d="M1074,746 l8,4 l-5,6 z"/><path d="M1091,750 l6,3 l-4,8 z"/><path d="M1062,762 l8,1 l-3,8 z"/><path d="M1080,764 l7,-3 l1,8 z"/><path d="M1049,745 l5,7 l-5,4 z"/><path d="M1096,735 l5,8 l-6,1 z"/><path d="M1070,735 l5,2 l-2,5 z"/>
</g>
</g>
<g fill="#80f080" opacity="0.55">
<path d="M1060,740 l6,-2 l1,6 z"/><path d="M1078,738 l6,1 l-2,5 z"/><path d="M1070,755 l6,1 l-3,5 z"/><path d="M1088,760 l5,1 l-2,5 z"/><path d="M1056,758 l4,3 l-3,3 z"/><path d="M1085,745 l4,2 l-3,3 z"/>
</g>
<ellipse cx="1075.5" cy="745" rx="28" ry="29.5" fill="none" stroke="#239023" stroke-width="2" opacity="0.7" filter="url(#bl2)"/>
<path d="M1100,818 L1103,805 L1119,803 L1121,823" fill="none" stroke="#2a9a2a" stroke-width="1.5" opacity="0.6"/>
</g>
</svg>
<!-- 3D toolbar -->
<div class="a" style="left:1459px;top:478px;width:27px;height:364px;background:#ebebf0"></div>
<div class="a" style="left:1460px;top:480px;width:25px;height:25px;background:#a9b9da"></div>
<div class="a" style="left:1460px;top:748px;width:25px;height:25px;background:#a9b9da"></div>


<!-- VIEWPORT SCROLLBARS -->
<div class="a" style="left:708px;top:172px;width:20px;height:298px;background:#e9e9e9"></div>
<div class="a" style="left:708px;top:172px;width:20px;height:21px;background:#fff;border-bottom:2px solid #b0b0b0"></div>
<div class="a" style="left:708px;top:310px;width:20px;height:22px;background:#fff;border-top:2px solid #b0b0b0;border-bottom:2px solid #b0b0b0"></div>
<div class="a" style="left:708px;top:448px;width:20px;height:22px;background:#fff;border-top:2px solid #b0b0b0"></div>
<svg class="a" style="left:712px;top:178px" width="12" height="8"><path d="M1,7 L6,1.5 L11,7 Z" fill="#6a6a6a"/></svg>
<svg class="a" style="left:712px;top:456px" width="12" height="8"><path d="M1,1 L6,6.5 L11,1 Z" fill="#6a6a6a"/></svg>

<div class="a" style="left:1465px;top:172px;width:20px;height:298px;background:#e9e9e9"></div>
<div class="a" style="left:1465px;top:172px;width:20px;height:22px;background:#fff;border-bottom:2px solid #b0b0b0"></div>
<div class="a" style="left:1465px;top:309px;width:20px;height:24px;background:#fff;border-top:2px solid #b0b0b0;border-bottom:2px solid #b0b0b0"></div>
<div class="a" style="left:1465px;top:448px;width:20px;height:22px;background:#fff;border-top:2px solid #b0b0b0"></div>
<svg class="a" style="left:1469px;top:178px" width="12" height="8"><path d="M1,7 L6,1.5 L11,7 Z" fill="#6a6a6a"/></svg>
<svg class="a" style="left:1469px;top:456px" width="12" height="8"><path d="M1,1 L6,6.5 L11,1 Z" fill="#6a6a6a"/></svg>

<div class="a" style="left:701px;top:478px;width:20px;height:364px;background:#e9e9e9"></div>
<div class="a" style="left:701px;top:478px;width:20px;height:22px;background:#fff;border-bottom:2px solid #b0b0b0"></div>
<div class="a" style="left:701px;top:648px;width:20px;height:24px;background:#fff;border-top:2px solid #b0b0b0;border-bottom:2px solid #b0b0b0"></div>
<div class="a" style="left:701px;top:820px;width:20px;height:22px;background:#fff;border-top:2px solid #b0b0b0"></div>
<svg class="a" style="left:705px;top:484px" width="12" height="8"><path d="M1,7 L6,1.5 L11,7 Z" fill="#6a6a6a"/></svg>
<svg class="a" style="left:705px;top:828px" width="12" height="8"><path d="M1,1 L6,6.5 L11,1 Z" fill="#6a6a6a"/></svg>

<!-- expand icons -->
<svg class="a" style="left:684px;top:176px" width="20" height="20"><g fill="none" stroke="#6aa0e0" stroke-width="2"><path d="M2,18 L14,6 M6,5.5 H14.5 V14 M5,2 H18 V15"/></g></svg>
<svg class="a" style="left:1441px;top:176px" width="20" height="20"><g fill="none" stroke="#6aa0e0" stroke-width="2"><path d="M2,18 L14,6 M6,5.5 H14.5 V14 M5,2 H18 V15"/></g></svg>
<svg class="a" style="left:677px;top:482px" width="20" height="20"><g fill="none" stroke="#6aa0e0" stroke-width="2"><path d="M2,18 L14,6 M6,5.5 H14.5 V14 M5,2 H18 V15"/></g></svg>
<svg class="a" style="left:1435px;top:482px" width="20" height="20"><g fill="none" stroke="#3a8ad8" stroke-width="2"><path d="M2,18 L14,6 M6,5.5 H14.5 V14 M5,2 H18 V15"/></g></svg>

<!-- 3D toolbar icons -->
<svg class="a" style="left:1459px;top:478px" width="27" height="364" viewBox="1459 478 27 364">
<g fill="#5a9a6a"><rect x="1465" y="486" width="3" height="3"/><rect x="1469" y="486" width="3" height="3"/><rect x="1473" y="486" width="3" height="3"/><rect x="1465" y="490" width="3" height="3"/><rect x="1469" y="490" width="3" height="3"/><rect x="1473" y="490" width="3" height="3"/><rect x="1465" y="494" width="3" height="3"/><rect x="1469" y="494" width="3" height="3"/><rect x="1473" y="494" width="3" height="3"/><rect x="1465" y="498" width="3" height="3"/><rect x="1469" y="498" width="3" height="3"/><rect x="1473" y="498" width="3" height="3"/></g>
<g fill="#58708a"><rect x="1470" y="482" width="3" height="3"/><rect x="1474" y="482" width="3" height="3"/><rect x="1478" y="482" width="3" height="3"/><rect x="1478" y="486" width="3" height="3"/><rect x="1478" y="490" width="3" height="3"/><rect x="1478" y="494" width="3" height="3"/></g>
<path d="M1462,507.5 H1483" stroke="#ccc"/>
<circle cx="1469" cy="520" r="5.5" fill="none" stroke="#333" stroke-width="1.1"/><circle cx="1474" cy="525" r="5.5" fill="#7ab8ee" stroke="#2a70c0" stroke-width="1.1" fill-opacity="0.9"/>
<rect x="1467" y="543" width="10" height="10" fill="#4ea64e" stroke="#333" stroke-width="1"/><path d="M1466,540 H1478" stroke="#333" stroke-dasharray="1.5,1.5"/><path d="M1465,545 V552 M1479,545 V552" stroke="#333"/>
<path d="M1472,563 L1466,577 H1478 Z M1469,570 H1475 L1472,577 Z" fill="none" stroke="#333" stroke-width="1.1"/>
<path d="M1462,587.5 H1483" stroke="#ccc"/>
<path d="M1466,597 L1472,593 L1479,597 V604 L1472,608 L1466,604 Z" fill="#f0a830" stroke="#444" stroke-width="1"/><path d="M1466,597 L1472,601 L1479,597 M1472,601 V608" fill="none" stroke="#444" stroke-width="0.8"/>
<path d="M1462,616.5 H1483" stroke="#ccc"/>
<path d="M1472,623 V641 M1463,632 H1481 M1469,626 L1472,623 L1475,626 M1469,638 L1472,641 L1475,638 M1466,629 L1463,632 L1466,635 M1478,629 L1481,632 L1478,635" fill="none" stroke="#333" stroke-width="1.1"/>
<path d="M1465,653 A8,8 0 0 1 1479,654 M1479,662 A8,8 0 0 1 1465,661" fill="none" stroke="#333" stroke-width="1.1"/><path d="M1476,651 L1479.5,654.5 L1481,650 M1468,664 L1464.5,660.5 L1463,665" fill="none" stroke="#333" stroke-width="1"/>
<path d="M1465,676 L1472,672 L1480,676 V686 L1472,690 L1465,686 Z M1465,676 L1472,680 L1480,676 M1472,680 V690" fill="none" stroke="#2a70c0" stroke-width="1.3"/>
<path d="M1462,697.5 H1483" stroke="#ccc"/>
<path d="M1465,716 L1472,704 L1480,716 Z" fill="#f0a830"/><path d="M1464,716 H1481 L1475,720 H1468 Z" fill="#d03030"/><rect x="1470" y="707" width="4" height="10" fill="#3a80d0"/>
<path d="M1464,736 C1468,730 1476,730 1480,736 C1476,742 1468,742 1464,736 Z" fill="none" stroke="#333" stroke-width="1.2"/><circle cx="1472" cy="736" r="2.2" fill="none" stroke="#333" stroke-width="1.2"/>
<path d="M1472,752 V770 M1463,761 H1481" stroke="#4ea64e" stroke-width="2.4"/><path d="M1463,761 H1481" stroke="#e04040" stroke-width="2"/><path d="M1468,757 H1476" stroke="#f0a830" stroke-width="1.5"/>
<path d="M1467,776 V790 H1481 M1465,779 L1467,776 L1469,779 M1478,788 L1481,790 L1478,792" fill="none" stroke="#d0a020" stroke-width="1.1"/><path d="M1467,790 L1462,795" stroke="#4ea64e" stroke-width="1.1"/><path d="M1472,790 H1481" stroke="#e04040" stroke-width="1.1"/>
<path d="M1462,795.5 H1483" stroke="#ccc"/>
<rect x="1464" y="800" width="16" height="16" rx="2" fill="#333"/><circle cx="1472" cy="808" r="5.5" fill="#fff"/><path d="M1472,802.5 A5.5,5.5 0 0 1 1472,813.5 Z" fill="#333"/>
</svg>

<!-- LOG SCROLLBAR -->
<div class="a" style="left:1467px;top:871px;width:21px;height:76px;background:#fff;border:1px solid #b8b8b8"></div>
<div class="a" style="left:1467px;top:893px;width:21px;height:1px;background:#b8b8b8"></div>
<div class="a" style="left:1468px;top:895px;width:19px;height:9px;background:#e6e6e6"></div>
<div class="a" style="left:1467px;top:925px;width:21px;height:1px;background:#b8b8b8"></div>
<svg class="a" style="left:1472px;top:878px" width="12" height="8"><path d="M1,7 L6,1.5 L11,7 Z" fill="#6a6a6a"/></svg>
<svg class="a" style="left:1472px;top:932px" width="12" height="8"><path d="M1,1 L6,6.5 L11,1 Z" fill="#6a6a6a"/></svg>
<div class="a" style="left:1491px;top:846px;width:1px;height:105px;background:#c8c8c8"></div>
<div class="a" style="left:1489px;top:470px;width:3px;height:380px;background:#fff"></div>

<!-- LOG -->
<div class="a" style="left:0;top:871px;width:1489px;height:1px;background:#aaa"></div>
<div class="a" style="left:0;top:848px;width:51px;height:24px;border:1px solid #aaa;border-bottom:none;background:#fff"></div>
<div class="t" style="left:15px;top:855px;font-size:12.5px;color:#222">Log</div>
<div class="t" style="left:65px;top:855px;font-size:12.5px;color:#222">Volume Rendering</div>
<div class="t" style="left:200px;top:855px;font-size:12.5px;color:#222">Contrast</div>
<div class="a" style="left:0;top:872px;width:1489px;height:75px;overflow:hidden;font-family:'Liberation Mono',monospace;font-size:15px;line-height:20px;color:#111">
<div style="position:absolute;left:40px;top:-1px;white-space:pre">keep largest: ON
Bounding box corner 1: [-150.2930, 195.7073, -609.0000]
Bounding box corner 2: [149.7073, -104.2930, -461.0000]</div>
</div>
<div class="a" style="left:0;top:947px;width:1489px;height:4px;background:#ececec"></div>
<div class="t" style="left:3px;top:960px;font-family:'Liberation Mono',monospace;font-size:15px;color:#111">&gt;&gt;&gt;</div>

<!-- STATUS -->
<div class="a" style="left:0;top:1004px;width:1920px;height:26px;background:#2b579a"></div>
<div class="t" style="left:2px;top:1011px;font-size:13px;color:#fff">Zooming 194.87%</div>
<div class="t" style="right:0px;top:1011px;font-size:13px;color:#fff">No data or out of view</div>


<!-- RIGHT PANEL -->
<div class="t" style="left:1497px;top:177px;font-size:15px;color:#555">Project Management</div>
<svg class="a" style="left:1878px;top:175px" width="40" height="18">
<g fill="none" stroke="#333" stroke-width="2"><rect x="2" y="6" width="9" height="8"/><path d="M5,6 V3 H14 V11 H11"/></g>
<path d="M25,3 L35,13 M35,3 L25,13" stroke="#222" stroke-width="2.4"/>
</svg>
<div class="a" style="left:1554px;top:201px;width:55px;height:25px;border:1px solid #c8c8c8;border-bottom:none;background:#fff"></div>
<div class="t" style="left:1502px;top:206px;font-size:13px;color:#222">Images</div>
<div class="t" style="left:1564px;top:206px;font-size:13px;color:#222">Masks</div>
<div class="t" style="left:1619px;top:206px;font-size:13px;color:#222">Measurements</div>
<div class="a" style="left:1492px;top:225px;width:430px;height:358px;border:1px solid #b4b4b4;border-right:none"></div>
<div class="a" style="left:1554px;top:225px;width:55px;height:1px;background:#fff"></div>
<div class="a" style="left:1493px;top:226px;width:427px;height:29px;background:#fff;border-bottom:1px solid #e4e4e4"></div>
<div class="a" style="left:1643px;top:227px;width:1px;height:27px;background:#e6e6e6"></div>
<div class="a" style="left:1692px;top:227px;width:1px;height:27px;background:#e6e6e6"></div>
<div class="a" style="left:1781px;top:227px;width:1px;height:27px;background:#e6e6e6"></div>
<div class="a" style="left:1871px;top:227px;width:1px;height:27px;background:#e6e6e6"></div>
<div class="t" style="left:1498px;top:234px;font-size:14px;color:#222">Name</div>
<div class="a" style="left:1648px;top:230px;width:42px;height:22px;overflow:hidden"><div class="t" style="left:0;top:4px;font-size:14px;color:#222">Visible</div></div>
<div class="t" style="left:1697px;top:234px;font-size:14px;color:#222">Lower Thres</div>
<div class="t" style="left:1787px;top:234px;font-size:14px;color:#222">Upper Thres</div>
<div class="a" style="left:1877px;top:230px;width:43px;height:22px;overflow:hidden"><div class="t" style="left:0;top:4px;font-size:14px;color:#222">Assembly</div></div>
<div class="a" style="left:1644px;top:256px;width:276px;height:28px;background:#e9e9ed"></div>
<div class="a" style="left:1493px;top:256px;width:150px;height:29px;border:1px solid #4e6487;background:#fff"></div>
<div class="a" style="left:1496px;top:260px;width:40px;height:20px;background:#0a64c8"></div>
<div class="a" style="left:1524px;top:253px;width:37px;height:37px;border-radius:50%;background:rgba(240,235,120,0.75)"></div>
<div class="a" style="left:1524px;top:260px;width:12px;height:20px;background:#5c9a78"></div>
<div class="t" style="left:1497px;top:263px;font-size:14px;color:#fff">Green</div>
<svg class="a" style="left:1540px;top:261px" width="10" height="22"><path d="M2,1 H8 M5,1 V21 M2,21 H8" stroke="#111" stroke-width="1.3" fill="none"/></svg>
<svg class="a" style="left:1658px;top:263px" width="18" height="14"><path d="M1,7 C4,2 14,2 17,7 C14,12 4,12 1,7 Z" fill="none" stroke="#555" stroke-width="1.2"/><circle cx="9" cy="7" r="2.6" fill="#3d8ad6"/></svg>
<div class="t" style="left:1695px;top:264px;font-size:14px;color:#222">226</div>
<div class="t" style="left:1786px;top:264px;font-size:14px;color:#222">3071</div>
<!-- hscroll 1 -->
<div class="a" style="left:1493px;top:562px;width:427px;height:21px;background:#e8e8e8;border-top:1px solid #aaa;border-bottom:1px solid #aaa"></div>
<div class="a" style="left:1493px;top:562px;width:22px;height:21px;background:#fff;border:1px solid #aaa"></div>
<div class="a" style="left:1514px;top:562px;width:257px;height:21px;background:#fff;border:1px solid #aaa"></div>
<div class="a" style="left:1897px;top:562px;width:22px;height:21px;background:#fff;border:1px solid #aaa"></div>
<svg class="a" style="left:1500px;top:567px" width="8" height="10"><path d="M6,1 L1,5 L6,9 Z" fill="#555"/></svg>
<svg class="a" style="left:1905px;top:567px" width="8" height="10"><path d="M2,1 L7,5 L2,9 Z" fill="#555"/></svg>
<!-- toolbar 1 -->
<svg class="a" style="left:1783px;top:585px" width="137" height="18">
<g fill="none" stroke="#555" stroke-width="1.3">
<path d="M3,9 H16 M9.5,2.5 V15.5"/>
<path d="M27,2 V12 M22,8 L27,13 L32,8 M20,12 V15 H34 V12"/>
<path d="M38,3 L50,15 M50,3 L38,15"/>
<rect x="55" y="3" width="12" height="12"/><path d="M61,7 V13" stroke-width="1.8"/><circle cx="61" cy="5" r="0.8" fill="#555"/>
<path d="M72,4 H78 L82,8 V16 H72 Z M78,4 V8 H82 M75,2 H80 L85,6 V14"/>
<path d="M90,12 L98,4 L103,9 L96,16 H91 Z M94,8 L99,13" />
<path d="M106,6 L112,3 L118,6 V13 L112,16 L106,13 Z M106,6 L112,9 L118,6 M112,9 V16"/>
<circle cx="129" cy="9" r="6.5"/><path d="M126,9 L128.5,11.5 L132.5,7"/>
</g></svg>
<div class="t" style="left:1700px;top:597px;font-size:12px;color:#555">...</div>
<!-- tabs 2 -->
<div class="a" style="left:1492px;top:630px;width:428px;height:1px;background:#b4b4b4"></div>
<div class="a" style="left:1492px;top:607px;width:63px;height:24px;border:1px solid #b4b4b4;border-bottom:none;background:#fff"></div>
<div class="t" style="left:1502px;top:612px;font-size:13px;color:#222">Objects</div>
<div class="t" style="left:1565px;top:612px;font-size:13px;color:#222">Reslice Objects</div>
<div class="t" style="left:1672px;top:612px;font-size:13px;color:#222">Soft tissue</div>
<div class="a" style="left:1492px;top:631px;width:1px;height:319px;background:#b4b4b4"></div>
<div class="a" style="left:1493px;top:659px;width:400px;height:1px;background:#ececec"></div>
<div class="a" style="left:1643px;top:632px;width:1px;height:27px;background:#e6e6e6"></div>
<div class="a" style="left:1692px;top:632px;width:1px;height:27px;background:#e6e6e6"></div>
<div class="a" style="left:1747px;top:632px;width:1px;height:27px;background:#e6e6e6"></div>
<div class="a" style="left:1797px;top:632px;width:1px;height:27px;background:#e6e6e6"></div>
<div class="t" style="left:1498px;top:639px;font-size:14px;color:#222">Name</div>
<div class="a" style="left:1648px;top:635px;width:42px;height:22px;overflow:hidden"><div class="t" style="left:0;top:4px;font-size:14px;color:#222">Visible</div></div>
<div class="a" style="left:1697px;top:635px;width:47px;height:22px;overflow:hidden"><div class="t" style="left:0;top:4px;font-size:14px;color:#222">Contour</div></div>
<div class="a" style="left:1752px;top:635px;width:43px;height:22px;overflow:hidden"><div class="t" style="left:0;top:4px;font-size:14px;color:#222">Transparency</div></div>
<div class="t" style="left:1802px;top:639px;font-size:14px;color:#222">Images</div>
<!-- hscroll 2 -->
<div class="a" style="left:1493px;top:930px;width:427px;height:20px;background:#fff;border-top:1px solid #aaa;border-bottom:1px solid #aaa"></div>
<div class="a" style="left:1493px;top:930px;width:22px;height:20px;background:#fff;border:1px solid #aaa"></div>
<div class="a" style="left:1874px;top:930px;width:24px;height:20px;background:#e8e8e8;border:1px solid #aaa"></div>
<div class="a" style="left:1897px;top:930px;width:22px;height:20px;background:#fff;border:1px solid #aaa"></div>
<svg class="a" style="left:1500px;top:935px" width="8" height="10"><path d="M6,1 L1,5 L6,9 Z" fill="#555"/></svg>
<svg class="a" style="left:1905px;top:935px" width="8" height="10"><path d="M2,1 L7,5 L2,9 Z" fill="#555"/></svg>
<!-- toolbar 2 -->
<svg class="a" style="left:1783px;top:953px" width="137" height="18">
<g fill="none" stroke="#555" stroke-width="1.3">
<path d="M3,9 H16 M9.5,2.5 V15.5"/>
<path d="M21,3 L33,15 M33,3 L21,15" stroke="#888"/>
<rect x="38" y="3" width="12" height="12"/><path d="M44,7 V13" stroke-width="1.8"/>
<path d="M55,4 H61 L65,8 V16 H55 Z M61,4 V8 H65 M58,2 H63 L68,6 V14"/>
<path d="M72,5 H78 L80,7 H86 V15 H72 Z"/>
<path d="M89,5 H95 L97,7 H103 V15 H89 Z M97,11 L102,16 M102,11 L97,16"/>
<path d="M106,3 L111,9 V16 M116,3 L111,9"/>
<circle cx="129" cy="9" r="6.5"/><path d="M126,9 L128.5,11.5 L132.5,7"/>
</g></svg>
<div class="t" style="left:1700px;top:965px;font-size:12px;color:#555">...</div>
<!-- tabs 3 -->
<div class="a" style="left:1492px;top:998px;width:428px;height:1px;background:#b4b4b4"></div>
<div class="a" style="left:1492px;top:975px;width:127px;height:24px;border:1px solid #b4b4b4;border-bottom:none;background:#fff"></div>
<div class="t" style="left:1502px;top:980px;font-size:13px;color:#222">Simulation Objects</div>
<div class="t" style="left:1629px;top:980px;font-size:13px;color:#222">Snap</div>
<div class="t" style="left:1678px;top:980px;font-size:13px;color:#222">Transformations</div>


</body></html>
